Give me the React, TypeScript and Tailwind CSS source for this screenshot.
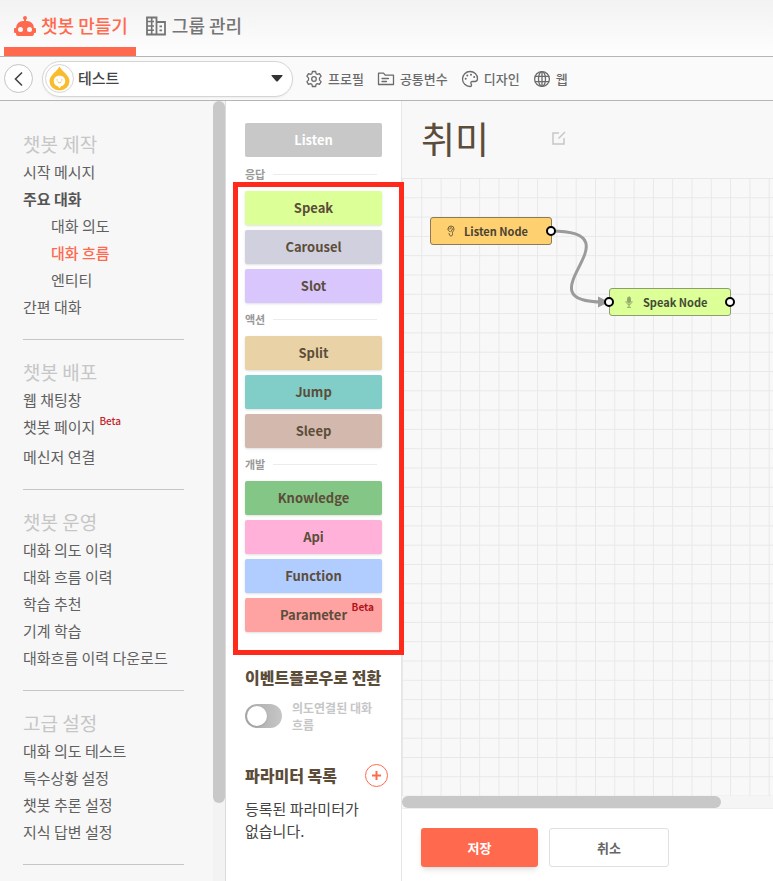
import type { ReactNode } from "react";

type MenuItem = { label: string; kind?: "strong" | "child" | "active"; beta?: boolean };

const MENU: { title: string; items: MenuItem[] }[] = [
  {
    title: "챗봇 제작",
    items: [
      { label: "시작 메시지" },
      { label: "주요 대화", kind: "strong" },
      { label: "대화 의도", kind: "child" },
      { label: "대화 흐름", kind: "active" },
      { label: "엔티티", kind: "child" },
      { label: "간편 대화" },
    ],
  },
  {
    title: "챗봇 배포",
    items: [{ label: "웹 채팅창" }, { label: "챗봇 페이지", beta: true }, { label: "메신저 연결" }],
  },
  {
    title: "챗봇 운영",
    items: [
      { label: "대화 의도 이력" },
      { label: "대화 흐름 이력" },
      { label: "학습 추천" },
      { label: "기계 학습" },
      { label: "대화흐름 이력 다운로드" },
    ],
  },
  {
    title: "고급 설정",
    items: [
      { label: "대화 의도 테스트" },
      { label: "특수상황 설정" },
      { label: "챗봇 추론 설정" },
      { label: "지식 답변 설정" },
    ],
  },
];

const ITEM_STYLE = {
  plain: "text-[#606060]",
  strong: "font-bold text-[#555]",
  child: "pl-7 text-[#606060]",
  active: "pl-7 font-medium text-[#ff6a4f]",
};

const PALETTE: { title: string; blocks: { label: string; color: string; beta?: boolean }[] }[] = [
  {
    title: "응답",
    blocks: [
      { label: "Speak", color: "bg-[#dcff97]" },
      { label: "Carousel", color: "bg-[#d1d0de]" },
      { label: "Slot", color: "bg-[#d8c6fd]" },
    ],
  },
  {
    title: "액션",
    blocks: [
      { label: "Split", color: "bg-[#e8d2a6]" },
      { label: "Jump", color: "bg-[#81cdc8]" },
      { label: "Sleep", color: "bg-[#d3b8ad]" },
    ],
  },
  {
    title: "개발",
    blocks: [
      { label: "Knowledge", color: "bg-[#84c686]" },
      { label: "Api", color: "bg-[#ffb1d9]" },
      { label: "Function", color: "bg-[#b1ccff]" },
      { label: "Parameter", color: "bg-[#ffa3a2]", beta: true },
    ],
  },
];

function RobotIcon() {
  return (
    <svg viewBox="0 0 24 24" className="size-6 shrink-0" fill="currentColor" aria-hidden="true">
      <path d="M12,2A2,2 0 0,1 14,4C14,4.74 13.6,5.39 13,5.73V7H14A7,7 0 0,1 21,14H22A1,1 0 0,1 23,15V18A1,1 0 0,1 22,19H21V20A2,2 0 0,1 19,22H5A2,2 0 0,1 3,20V19H2A1,1 0 0,1 1,18V15A1,1 0 0,1 2,14H3A7,7 0 0,1 10,7H11V5.73C10.4,5.39 10,4.74 10,4A2,2 0 0,1 12,2M7.5,13A2.5,2.5 0 0,0 5,15.5A2.5,2.5 0 0,0 7.5,18A2.5,2.5 0 0,0 10,15.5A2.5,2.5 0 0,0 7.5,13M16.5,13A2.5,2.5 0 0,0 14,15.5A2.5,2.5 0 0,0 16.5,18A2.5,2.5 0 0,0 19,15.5A2.5,2.5 0 0,0 16.5,13Z" />
    </svg>
  );
}

function BuildingIcon() {
  return (
    <svg viewBox="0 0 24 24" className="size-6 shrink-0" fill="none" stroke="currentColor" strokeWidth="1.800" aria-hidden="true">
      <path d="M3 3.500h9.500v17H3zM12.500 8h8.500v12.500h-8.500" />
      <path d="M3 7.500h7M3 12h7M3 16.300h7M7.700 3.500v17" strokeWidth="1.600" />
      <path d="M15.500 12.300h2.500M15.500 16.300h2.500" />
    </svg>
  );
}

function LineIcon({ children }: { children: ReactNode }) {
  return (
    <svg
      viewBox="0 0 18 18"
      className="size-[18px] shrink-0"
      fill="none"
      stroke="currentColor"
      strokeWidth="1.3"
      strokeLinecap="round"
      strokeLinejoin="round"
      aria-hidden="true"
    >
      {children}
    </svg>
  );
}

const TOOLS: { label: string; icon: ReactNode }[] = [
  {
    label: "프로필",
    icon: (
      <LineIcon>
        <path d="M7.4 1.5h3.2l.5 2.2 1.3.7 2.1-.7 1.6 2.7-1.6 1.5v2.2l1.6 1.5-1.6 2.7-2.1-.7-1.3.7-.5 2.2H7.4l-.5-2.2-1.3-.7-2.1.7-1.6-2.7 1.6-1.5V7.900L1.900 6.400 3.500 3.700l2.100.7 1.300-.7z" />
        <circle cx="9" cy="9" r="2.3" />
      </LineIcon>
    ),
  },
  {
    label: "공통변수",
    icon: (
      <LineIcon>
        <path d="M1.500 14.500V3.200h5l1.700 2h8.300v9.300z" />
        <path d="M5 8.500h6.500M5 11.500h4.500" />
      </LineIcon>
    ),
  },
  {
    label: "디자인",
    icon: (
      <LineIcon>
        <path d="M9 1.500a7.500 7.500 0 1 0 0 15c1.600 0 1.900-1.300 1.200-2.300-.8-1.300-.3-2.700 1.300-2.700h2.300c1.800 0 2.700-1.200 2.700-2.800C16.500 4.600 13.200 1.500 9 1.500z" />
        <path d="M4.700 8.800v.01M6.300 5.600v.01M10 4.700v.01M13.200 7v.01" strokeWidth="2" />
      </LineIcon>
    ),
  },
  {
    label: "웹",
    icon: (
      <LineIcon>
        <circle cx="9" cy="9" r="7.400" />
        <ellipse cx="9" cy="9" rx="3.500" ry="7.400" />
        <path d="M2.300 6.300h13.400M2.300 11.700h13.400M9 1.600v14.800" />
      </LineIcon>
    ),
  },
];

function Header() {
  return (
    <header className="h-[57px] shrink-0 border-b border-[#b5b5b5] bg-linear-to-b from-[#f2f2f2] to-[#fefefe]">
      <nav className="flex h-full gap-2 pl-1 text-[18px] font-medium">
        <a href="#make" className="flex items-center gap-1 border-b-[9px] border-[#ff6a4f] pt-1 pr-2 pl-[9px] text-[#ff6a4f]">
          <RobotIcon />
          챗봇 만들기
        </a>
        <a href="#group" className="flex items-center gap-1 border-b-[9px] border-transparent pt-1 text-[#757575]">
          <BuildingIcon />
          그룹 관리
        </a>
      </nav>
    </header>
  );
}

function Toolbar() {
  return (
    <div className="flex h-11 shrink-0 items-center border-b border-[#b5b5b5] bg-[#fafafa] pl-1">
      <button type="button" aria-label="뒤로" className="flex size-[29px] items-center justify-center rounded-full border border-[#c4c4c4] bg-white">
        <svg viewBox="0 0 14 16" className="h-4 w-[14px]" fill="none" stroke="#444" strokeWidth="1.6" aria-hidden="true">
          <path d="M10 1.500 3.500 8l6.500 6.500" />
        </svg>
      </button>
      <div className="relative ml-[9px] flex h-9 w-[251px] items-center rounded-full border border-[#d5d5d5] bg-white shadow-xs">
        <span className="ml-[2px] flex size-[29px] shrink-0 items-center justify-center rounded-full border border-[#d5d5d5]">
          <svg viewBox="0 0 22 26" className="h-[25px] w-[21px]" aria-hidden="true">
            <path d="M11 0.500C13.500 5.500 21.500 9.500 21.500 16a10.500 9.500 0 0 1-21 0C.5 9.500 8.500 5.500 11 .5z" fill="#f9bc2f" />
            <path d="M11 10c3.800 0 6 2.300 6 5.500 0 3-1.900 5-4.300 5.500L11 23.200 9.300 21C6.900 20.500 5 18.500 5 15.500 5 12.300 7.200 10 11 10z" fill="#fff" />
            <path d="M9 16.500q2 2 4 0" fill="none" stroke="#f9bc2f" />
            <circle cx="8.500" cy="14.500" r=".7" fill="#f9bc2f" />
            <circle cx="13.500" cy="14.500" r=".7" fill="#f9bc2f" />
          </svg>
        </span>
        <select aria-label="챗봇 선택" className="h-full min-w-0 flex-1 appearance-none rounded-full pl-1 text-[15px] font-medium text-[#444] outline-none">
          <option>테스트</option>
        </select>
        <svg viewBox="0 0 12 7" className="pointer-events-none absolute right-[9px] h-[7px] w-3" fill="#333" aria-hidden="true">
          <path d="M1 0h10q1 0 .4 1L7 6q-1 1-2 0L.6 1Q0 0 1 0z" />
        </svg>
      </div>
      <div className="ml-3 flex gap-[13px] text-[13px] font-medium text-[#6b6b6b]">
        {TOOLS.map((tool) => (
          <button key={tool.label} type="button" className="flex items-center gap-[5px] whitespace-nowrap">
            {tool.icon}
            {tool.label}
          </button>
        ))}
      </div>
    </div>
  );
}

function Sidebar() {
  return (
    <div className="flex w-[226px] shrink-0 border-r border-[#dcdcdc] bg-[#f7f7f7]">
      <nav className="flex-1 overflow-y-auto pt-[29px] pr-[29px] pl-[23px] [scrollbar-width:none]">
        {MENU.map((section) => (
          <section key={section.title} className="mb-[18px]">
            <h2 className="h-7 text-[19px] leading-7 text-[#c6c6c6]">{section.title}</h2>
            <ul className="border-b border-[#c6c6c6] pb-[19px] text-[15px] leading-[27px]">
              {section.items.map((item) => (
                <li key={item.label} className={ITEM_STYLE[item.kind ?? "plain"]}>
                  {item.beta ? (
                    <a href="#menu" className="flex h-[30px] items-start gap-1">
                      {item.label}
                      <span className="text-[10px] leading-4 font-medium text-[#c4262b]">Beta</span>
                    </a>
                  ) : (
                    <a href="#menu" className="block whitespace-nowrap">
                      {item.label}
                    </a>
                  )}
                </li>
              ))}
            </ul>
          </section>
        ))}
      </nav>
      <div className="w-3 bg-[#f3f3f3]">
        <div className="h-[90%] w-full rounded-full bg-[#c8c8c8]" />
      </div>
    </div>
  );
}

function Palette() {
  return (
    <aside className="w-[176px] shrink-0 border-r border-[#e6e6e6] bg-white px-[19px] pt-[22px]">
      <button type="button" disabled className="mb-px block h-[34px] w-full rounded-[2px] bg-[#c8c8c8] text-[13px] font-bold text-white">
        Listen
      </button>
      <div className="relative">
        {PALETTE.map((group) => (
          <section key={group.title}>
            <h3 className="flex h-[33px] items-center gap-2 pr-[5px] text-[11px] font-bold text-[#999]">
              {group.title}
              <span className="h-px flex-1 bg-[#ececec]" />
            </h3>
            <div className="flex flex-col gap-[5px]">
              {group.blocks.map((block) => (
                <button
                  key={block.label}
                  type="button"
                  className={`relative h-[34px] rounded-[2px] text-[13px] font-bold text-[#5c4d3a] shadow-sm ${block.color}`}
                >
                  {block.label}
                  {block.beta && (
                    <span className="absolute top-px right-2 text-[10px] leading-4 font-bold text-[#b3131b]">Beta</span>
                  )}
                </button>
              ))}
            </div>
          </section>
        ))}
        <div className="pointer-events-none absolute top-6 -right-[22px] -bottom-[23px] -left-3 z-10 border-[5px] border-[#ff2a1c]" />
      </div>
      <h3 className="mt-[34px] text-[16px] leading-[22px] font-black whitespace-nowrap text-[#5c4d3a]">이벤트플로우로 전환</h3>
      <label className="mt-[11px] flex items-center gap-[10px] text-[12px] leading-[17px] font-bold break-keep text-[#c6c6c6]">
        <input type="checkbox" className="peer sr-only" />
        <span className="flex h-6 w-[37px] shrink-0 items-center rounded-full bg-linear-to-r from-[#aaa] to-[#c6c6c6] px-[2px]">
          <span className="size-5 rounded-full bg-white shadow-sm" />
        </span>
        <span>의도연결된 대화 흐름</span>
      </label>
      <div className="mt-[30px] -mr-[6px] flex items-center justify-between">
        <h3 className="text-[16px] leading-6 font-black text-[#5c4d3a]">파라미터 목록</h3>
        <button type="button" aria-label="파라미터 추가" className="flex size-[23px] items-center justify-center rounded-full border border-[#ff6a4f]">
          <svg viewBox="0 0 9 9" className="size-[9px]" stroke="#ff6a4f" strokeWidth="2" aria-hidden="true">
            <path d="M4.500 0v9M0 4.500h9" />
          </svg>
        </button>
      </div>
      <p className="mt-[11px] text-[15px] leading-[22px] break-keep text-[#444]">등록된 파라미터가 없습니다.</p>
    </aside>
  );
}

function Port({ side }: { side: "left" | "right" }) {
  return (
    <span
      className={`absolute top-[8px] size-[10px] rounded-full border-2 border-black bg-white ${side === "left" ? "-left-[6px]" : "-right-[5px]"}`}
    />
  );
}

function Canvas() {
  return (
    <div className="relative flex-1 overflow-hidden">
      <svg className="absolute inset-0 h-full w-full" aria-hidden="true">
        <defs>
          <pattern id="grid" width="19.3" height="19.3" patternUnits="userSpaceOnUse">
            <path d="M0 .5h19.300M.5 0v19.300" stroke="#e8e8e8" fill="none" />
          </pattern>
        </defs>
        <rect width="100%" height="100%" fill="url(#grid)" />
        <path d="M149 53C240 53 116 124 201 124" fill="none" stroke="#9b9b9b" strokeWidth="3" />
        <path d="M196 118.500 207 124l-11 5.500z" fill="#9b9b9b" />
      </svg>
      <div className="absolute top-[39px] left-7 flex h-7 w-[122px] items-center rounded-[3px] border border-[#8c7a56] bg-[#ffd070] text-[11px] font-bold text-[#4a4334]">
        <svg viewBox="0 0 8 12" className="ml-4 h-3 w-2" fill="none" stroke="#6f6038" strokeLinecap="round" aria-hidden="true">
          <path d="M1 4a3 3 0 1 1 6 0c0 2.400-2 2.300-1.500 4.500C6 10.700 4 11.800 2.800 10.500L2 8.500M1 4c0 1 .4 2 1.600 2.500M2.800 4a1.300 1.300 0 1 1 2.200 1L3.800 6.800" />
        </svg>
        <span className="ml-[9px]">Listen Node</span>
        <Port side="right" />
      </div>
      <div className="absolute top-[110px] left-[207px] flex h-7 w-[122px] items-center rounded-[3px] border border-[#8f9c70] bg-[#dcff97] text-[11px] font-bold text-[#434a34]">
        <svg viewBox="0 0 8 12" className="ml-[15px] h-3 w-2" fill="none" stroke="#93a86a" strokeLinecap="round" aria-hidden="true">
          <rect x="2.500" y="1" width="3" height="6" rx="1.500" fill="#93a86a" />
          <path d="M1 5.500c0 4 6 4 6 0M4 8.500v2.500M2.500 11.300h3" />
        </svg>
        <span className="ml-[10px]">Speak Node</span>
        <Port side="left" />
        <Port side="right" />
      </div>
    </div>
  );
}

function Editor() {
  return (
    <main className="flex min-w-0 flex-1 flex-col bg-[#f8f8f8]">
      <div className="flex h-[77px] shrink-0 items-center justify-between pr-[207px] pb-1 pl-[19px]">
        <h1 className="text-[37px] leading-[54px] text-[#5c4d3a]">취미</h1>
        <button type="button" aria-label="이름 수정">
          <svg viewBox="0 0 14 14" className="size-[14px]" fill="none" stroke="#c6c6c6" strokeWidth="1.500" aria-hidden="true">
            <path d="M7 2H1v11h11V7M6.500 7.500 13 1" />
          </svg>
        </button>
      </div>
      <Canvas />
      <div className="h-3 shrink-0 bg-[#f5f5f5]">
        <div className="h-full w-[86%] rounded-full bg-[#c8c8c8]" />
      </div>
      <footer className="flex h-[73px] shrink-0 gap-[11px] border-t border-[#eee] bg-white pt-[19px] pl-[19px] text-[13px] font-bold">
        <button type="button" className="h-[39px] w-[117px] rounded-[3px] bg-[#ff6a4f] text-white shadow-md">
          저장
        </button>
        <button type="button" className="h-[39px] w-[120px] rounded-[3px] border border-[#e0e0e0] bg-white text-[#666]">
          취소
        </button>
      </footer>
    </main>
  );
}

export default function App() {
  return (
    <div className="flex h-screen flex-col overflow-hidden bg-white font-['Noto_Sans_CJK_KR',sans-serif]">
      <Header />
      <Toolbar />
      <div className="flex min-h-0 flex-1">
        <Sidebar />
        <Palette />
        <Editor />
      </div>
    </div>
  );
}
